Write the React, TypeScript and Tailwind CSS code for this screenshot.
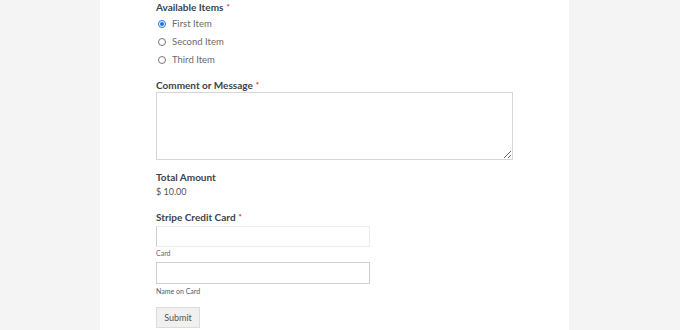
import React from "react";

const Req = () => <span className="text-[#e02b27] text-[8px] ml-[3px] align-top">*</span>;

const Radio = ({ checked, label }: { checked?: boolean; label: string }) => (
  <div className="flex items-center h-[18px]">
    <span
      className={
        "w-[8px] h-[8px] rounded-full ml-[2px] mr-[6px] flex items-center justify-center " +
        (checked ? "border border-[#1a73e8]" : "border border-[#777]")
      }
    >
      {checked && <span className="w-[4px] h-[4px] rounded-full bg-[#1a73e8]" />}
    </span>
    <span className="text-[9.5px] text-[#6b6b6b]">{label}</span>
  </div>
);

export default function App() {
  return (
    <div className="w-[680px] h-[330px] bg-[#f4f4f4] overflow-hidden" style={{ fontFamily: 'Lato, "Open Sans", sans-serif' }}>
      <div className="ml-[100px] w-[469px] h-full bg-white pl-[56px]">
        <div className="text-[10px] font-bold text-[#3c434a] leading-[14px] pt-0">
          Available Items<Req />
        </div>
        <div className="flex flex-col mt-[2px] -translate-y-[1px]">
          <Radio checked label="First Item" />
          <Radio label="Second Item" />
          <Radio label="Third Item" />
        </div>
        <div className="text-[10px] font-bold text-[#3c434a] leading-[14px] mt-[8px]">
          Comment or Message<Req />
        </div>
        <textarea className="block w-[357px] h-[68px] border border-[#d6d6d6] mt-0 outline-none" />
        <div className="text-[10px] font-bold text-[#3c434a] leading-[14px] mt-[10px]">Total Amount</div>
        <div className="text-[9px] text-[#555] leading-[14px] mt-[1px]">$ 10.00</div>
        <div className="text-[10px] font-bold text-[#3c434a] leading-[14px] mt-[11px]">
          Stripe Credit Card<Req />
        </div>
        <div className="w-[214px] h-[21px] border border-[#ececec] border-l-[#cfcfcf] mt-[2px]" />
        <div className="text-[7px] text-[#666] leading-[10px] mt-[1px]">Card</div>
        <div className="w-[214px] h-[22px] border border-[#cfcfcf] mt-[4px]" />
        <div className="text-[7px] text-[#4b5a78] leading-[10px] mt-[2px]">Name on Card</div>
        <button className="mt-[11px] w-[44px] h-[21px] bg-[#f0f0f0] border border-[#dcdcdc] text-[9px] text-[#555] flex items-center justify-center">
          Submit
        </button>
      </div>
    </div>
  );
}
